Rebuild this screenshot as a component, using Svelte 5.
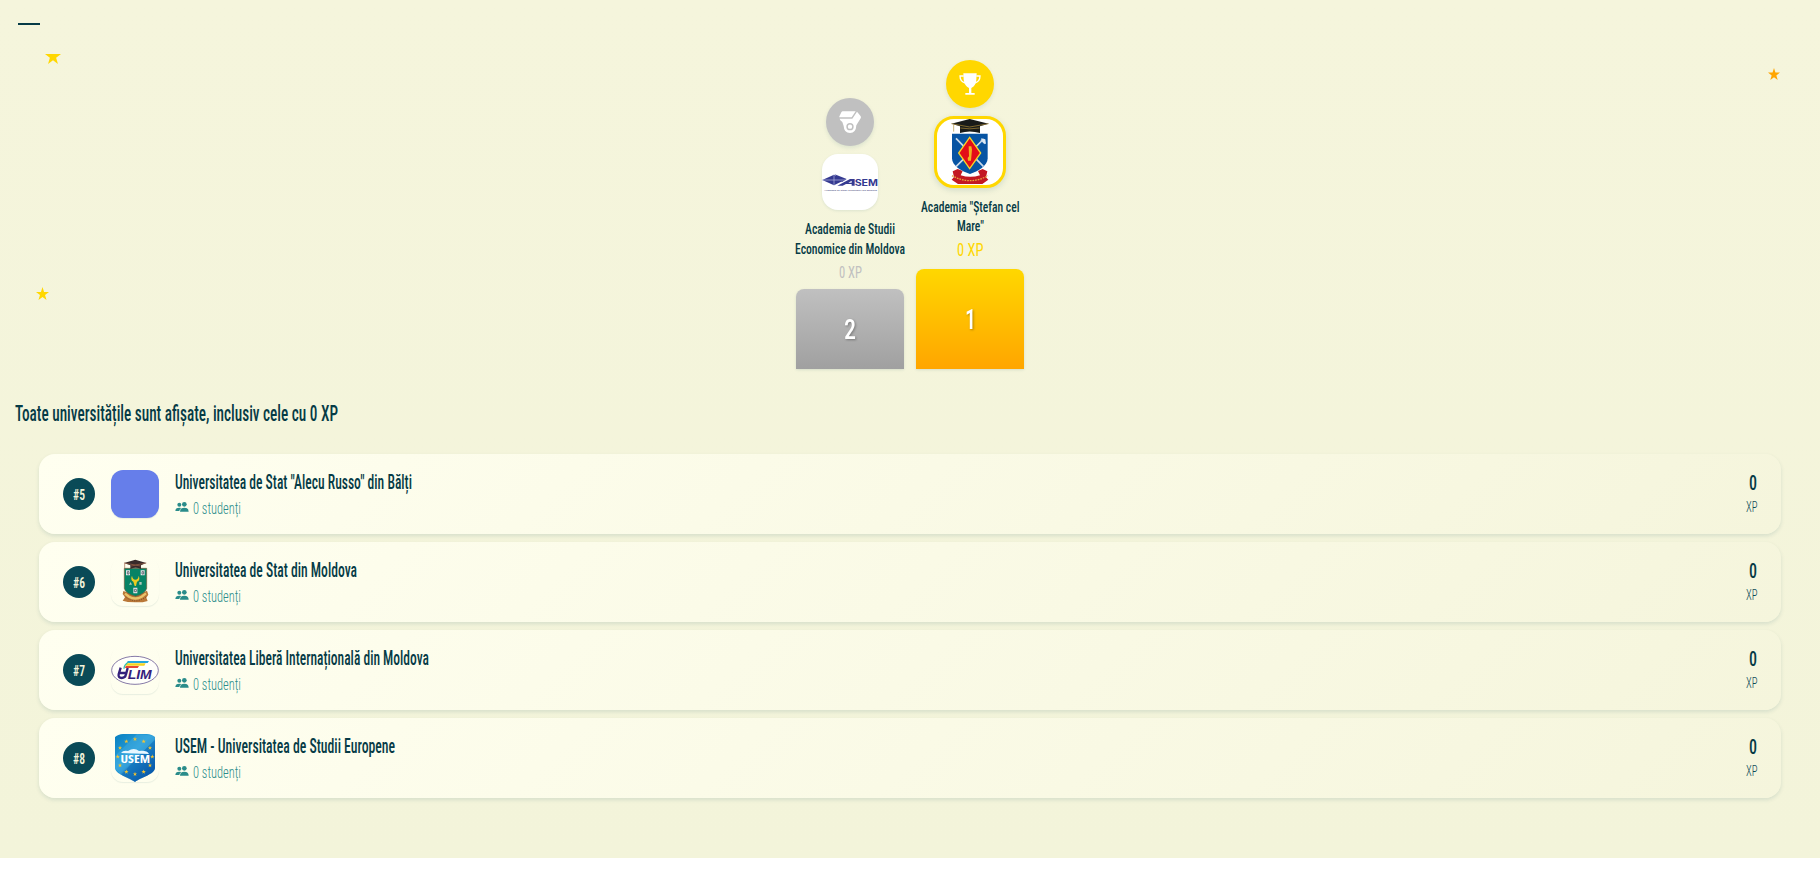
<script>
  const universities = [
    { rank: 5, name: 'Universitatea de Stat "Alecu Russo" din Bălți', width: 237, logo: 'blank' },
    { rank: 6, name: 'Universitatea de Stat din Moldova', width: 182, logo: 'usm' },
    { rank: 7, name: 'Universitatea Liberă Internațională din Moldova', width: 254, logo: 'ulim' },
    { rank: 8, name: 'USEM - Universitatea de Studii Europene', width: 220, logo: 'usem' }
  ];
  const euStars = Array.from({ length: 12 }, (_, i) => {
    const a = (i * Math.PI) / 6;
    return { x: 24 + 17.3 * Math.sin(a), y: 22.5 - 17.5 * Math.cos(a) };
  });
</script>

{#snippet line(text, width, size, height, base)}
  <svg class="line" {width} {height}>
    <text x="0" y={base} font-size={size} textLength={width} lengthAdjust="spacingAndGlyphs">{text}</text>
  </svg>
{/snippet}

{#snippet star(size)}
  <svg width={size} height={size} viewBox="0 0 20 19" preserveAspectRatio="none">
    <path fill="currentColor" d="M10 0l2.4 7.2H20l-6.1 4.5 2.3 7.3L10 14.5 3.8 19l2.3-7.3L0 7.2h7.6z" />
  </svg>
{/snippet}

{#snippet crest()}
  <svg width="66" height="66" viewBox="0 0 198 198">
    <path fill="#0754a3" d="M45 44h107v74c0 23-29 39-53 47-25-8-54-24-54-47z" />
    <path fill="none" stroke="#c9d9e8" stroke-width="5" d="M57 58l82 84M140 60l-83 83M132 62l12 12" />
    <path fill="#dfe9f3" d="M132 58l13 3 2 14-7-4z" />
    <path fill="#e30d18" stroke="#f6d426" stroke-width="4" d="M98 55l33 47-33 47-33-47z" />
    <path fill="#efb21f" d="M95 82h8l2 10-3 33h-9l-1-8 4-5z" />
    <path fill="#c31822" d="M47 157l15-7 15 6-6 13c19 6 39 6 58 0l-6-13 14-6 14 7-4 18 7 7-18 13H63l-19-13 7-8z" />
    <path fill="none" stroke="#e9a63b" stroke-width="4" stroke-dasharray="5 3" d="M45 170q54 30 108 0" />
    <path fill="#191b19" d="M43 14L98 0l57 14-26 8v20q-31-9-60 0V22z" />
    <path fill="none" stroke="#b18e38" stroke-width="2" d="M43 14l55 10 57-10M50 18v20M70 27q28 5 58 0" />
  </svg>
{/snippet}

{#snippet asem()}
  <svg width="56" height="56" viewBox="0 0 168 168">
    <path fill="#353a91" d="M1 78l35-16 34 15-34 17z" />
    <path fill="#353a91" d="M46 95l38-20h14v20h-9v-5H72l-10 5zM79 86h10v-6z" />
    <path fill="#353a91" d="M38 61l36 14-14 9z" />
    <path stroke="#b9bce2" stroke-width="2" fill="none" d="M1 78h69M36 62v32" />
    <text x="98" y="95" font-size="25" font-family="Inter" font-weight="700" fill="#353a91" textLength="70" lengthAdjust="spacingAndGlyphs">SEM</text>
    <text x="7" y="111" font-size="7.5" font-family="Liberation Sans" font-weight="700" fill="#6a6c94" textLength="158" lengthAdjust="spacingAndGlyphs">Academia de Studii Economice din Moldova</text>
  </svg>
{/snippet}

{#snippet usm()}
  <svg width="48" height="48" viewBox="0 0 144 144">
    <path fill="#ba7838" d="M37 99l15 5 43 0 13-6 4 12-6 9 4 10-15 4-22 0-23-1-15-4 7-10-7-10z" />
    <path fill="none" stroke="#e9c36a" stroke-width="7" d="M42 107l12 9q19 11 38 0l13-10" />
    <path fill="none" stroke="#5c3b20" stroke-width="2" stroke-dasharray="3 4" d="M44 117q29 23 61 0" />
    <path fill="#078365" stroke="#725b38" stroke-width="2" d="M40 31h67v60q-3 15-33 24-31-8-34-24z" />
    <path fill="#e8e9ed" d="M45 37h12v15H45zM89 37h12v15H89zM67 89h12v17H67z" />
    <path fill="none" stroke="#68717a" stroke-width="3" d="M49 41h5v7h-5zM93 41h5v7h-5zM70 94h6v7h-6z" />
    <path fill="#edcc1f" d="M63 53q2 12 10 12 9 0 10-12 6 14-5 18l-3 13h-4l-4-13Q57 65 63 53z" />
    <path fill="#b1c6b9" d="M54 80l5-8 4 8zM85 72h7v8h-7z" />
    <path fill="#382a2a" d="M39 15l34-10 33 10-16 7v11q-16-8-32 0V22z" />
    <path fill="none" stroke="#a16548" stroke-width="2" d="M39 15l34 6 33-6M41 17v14M60 24q14-5 29 0" />
  </svg>
{/snippet}

{#snippet ulim()}
  <svg width="48" height="48" viewBox="0 0 144 144">
    <ellipse cx="72" cy="73" rx="70" ry="42" fill="#fffffa" stroke="#6d5f98" stroke-width="2.5" />
    <path fill="#23a6df" d="M50 45h64l-4 6H48z" />
    <path fill="#f4d322" d="M46 52h58l-4 7H43z" />
    <path fill="#e64835" d="M44 60h40l-4 6H42z" />
    <path fill="none" stroke="#31beaf" stroke-width="4" d="M53 48q-14 8-14 20" />
    <path fill="none" stroke="#35207c" stroke-width="7" d="M29 65l-6 20q-2 11 9 11t13-11l5-19M26 81h21" />
    <text x="50" y="99" font-size="40" font-family="Liberation Sans" font-style="italic" font-weight="700" fill="#35207c" textLength="72" lengthAdjust="spacingAndGlyphs">LIM</text>
  </svg>
{/snippet}

{#snippet usem()}
  <svg width="48" height="48" viewBox="0 0 48 48">
    <defs>
      <linearGradient id="shield" x1="0" y1="0" x2=".8" y2="1">
        <stop offset="0" stop-color="#087fc0" /><stop offset=".45" stop-color="#299fda" /><stop offset="1" stop-color="#0758ab" />
      </linearGradient>
    </defs>
    <path fill="url(#shield)" d="M6 0h36a2 2 0 0 1 2 2v32c0 6-13 9-20 14C17 43 4 40 4 34V2a2 2 0 0 1 2-2z" />
    <path fill="#034fa2" opacity=".3" d="M44 6v28c0 6-13 9-20 14-5-3-11-5-15-8z" />
    <path fill="#58b8e8" opacity=".3" d="M26 0L4 22v12l6 7L44 5V2z" />
    <path fill="#e7f7ff" d="M10 19q2-3 7-2 6-4 11 0 8-1 10 3z" />
    {#each euStars as s}
      <path fill="#f4c430" transform="translate({s.x - 2.2} {s.y - 2.2}) scale(.22)" d="M10 0l2.4 7.2H20l-6.1 4.5 2.3 7.3L10 14.5 3.8 19l2.3-7.3L0 7.2h7.6z" />
    {/each}
    <text x="9.5" y="28.7" font-size="11" font-family="Open Sans" font-weight="700" fill="#fff" textLength="29.5" lengthAdjust="spacingAndGlyphs">USEM</text>
  </svg>
{/snippet}

<main>
  <header><span class="menu"></span></header>

  <section class="stage">
    <span class="star s1">{@render star(16)}</span>
    <span class="star s2">{@render star(13)}</span>
    <span class="star s3">{@render star(12)}</span>

    <div class="place second">
      <div class="medal">
        <svg width="22" height="22" viewBox="0 0 66 66">
          <path fill="#fff" d="M11 1h39L38 19H1q-1-2 1-5L7 4q2-3 4-3z" />
          <path fill="#fff" fill-rule="evenodd" d="M2 23h38L54 2l10 12q3 4 1 8L52 43Q51 66 33 66T14 45L10 33 4 28zM33 36a11 11 0 1 0 0 22 11 11 0 1 0 0-22z" />
          <circle cx="33" cy="47" r="6.5" fill="#fff" />
        </svg>
      </div>
      <div class="logo">{@render asem()}</div>
      <div class="name">
        {@render line('Academia de Studii', 90, 15.5, 20, 14.8)}
        {@render line('Economice din Moldova', 110, 15.5, 20, 15)}
      </div>
      <div class="xp">{@render line('0 XP', 23, 15.8, 20, 15)}</div>
      <div class="block">{@render line('2', 12, 28, 40, 30)}</div>
    </div>

    <div class="place first">
      <div class="medal">
        <svg width="22" height="22" viewBox="0 0 66 66">
          <path fill="#fff" d="M13 1h40l-1 19q-2 19-15 25v15h10v5H19v-5h11V45Q17 39 14 20z" />
          <path fill="none" stroke="#fff" stroke-width="4" d="M14 9H3q0 17 16 21M52 9h11q0 17-16 21" />
        </svg>
      </div>
      <div class="logo">{@render crest()}</div>
      <div class="name">
        {@render line('Academia "Ștefan cel', 98.5, 15.5, 19, 15)}
        {@render line('Mare"', 27, 15.5, 19, 15)}
      </div>
      <div class="xp">{@render line('0 XP', 26.5, 19, 22, 16)}</div>
      <div class="block">{@render line('1', 11, 28, 40, 29.5)}</div>
    </div>
  </section>

  <h2>{@render line('Toate universitățile sunt afișate, inclusiv cele cu 0 XP', 323, 21.5, 30, 22.5)}</h2>

  <ul>
    {#each universities as u}
      <li>
        <span class="rank">{@render line('#' + u.rank, 12, 14.5, 20, 16.3)}</span>
        <span class="badge {u.logo}">
          {#if u.logo === 'usm'}{@render usm()}{:else if u.logo === 'ulim'}{@render ulim()}{:else if u.logo === 'usem'}{@render usem()}{/if}
        </span>
        <div class="info">
          <div class="title">{@render line(u.name, u.width, 19.9, 26, 21)}</div>
          <div class="students">
            <svg width="14" height="10" viewBox="0 0 42 30">
              <circle cx="13" cy="8" r="6" /><circle cx="28" cy="7" r="7" />
              <path d="M1 27q0-10 12-10 4 0 6 1-6 4-6 9zM15 29q0-12 13-12t13 12z" />
            </svg>
            {@render line('0 studenți', 48, 15.8, 20, 14.6)}
          </div>
        </div>
        <div class="score">
          <div class="points">{@render line('0', 8, 19.7, 26, 21)}</div>
          <div class="unit">{@render line('XP', 11.5, 14.5, 20, 14.8)}</div>
        </div>
      </li>
    {/each}
  </ul>
</main>

<style>
  :global(body) { background: #fff; }
  main {
    box-sizing: border-box;
    height: 858px;
    background: linear-gradient(#f5f5dc, #f3f4da);
    color: #063b46;
    font-family: Roboto, sans-serif;
    font-stretch: 75%;
  }
  svg { display: block; }
  .line { overflow: visible; flex: none; }
  .line text { fill: currentColor; }
  header { height: 54px; display: flex; padding: 23px 18px 0; box-sizing: border-box; }
  .menu { width: 22px; height: 2px; background: #063b46; }
  .stage {
    position: relative;
    height: 320px;
    padding-bottom: 5px;
    box-sizing: border-box;
    overflow: hidden;
    display: flex;
    justify-content: center;
    align-items: flex-end;
    gap: 12px;
  }
  .star { position: absolute; color: #ffd700; }
  .s1 { left: 45px; top: -6px; }
  .s2 { left: 35.5px; top: 232.5px; }
  .s3 { left: 1768px; top: 14px; color: #ffa500; }
  .place { width: 108px; display: flex; flex-direction: column; align-items: center; }
  .medal {
    width: 48px; height: 48px; border-radius: 50%;
    display: flex; align-items: center; justify-content: center;
    margin-bottom: 8px;
    box-shadow: 0 2px 4px rgba(10, 75, 90, .1);
  }
  .logo { box-sizing: border-box; background: #fff; overflow: hidden; }
  .name { display: flex; flex-direction: column; align-items: center; font-weight: 500; }
  .block {
    width: 108px; border-radius: 8px 8px 0 0; color: #fff; font-weight: 500;
    display: flex; align-items: center; justify-content: center;
    box-shadow: 0 1px 3px rgba(10, 75, 90, .12);
  }
  .block :global(svg) { filter: drop-shadow(1px 1px 1px rgba(0, 0, 0, .3)); }
  .second .medal { background: #c0c0c0; }
  .second .logo { width: 56px; height: 56px; border-radius: 16px; margin-bottom: 9px; box-shadow: 0 1px 3px rgba(10, 75, 90, .1); }
  .second .xp { color: #c0c0c0; margin: 4px 0 6px; }
  .second .block { height: 80px; background: linear-gradient(#c0c0c0, #a0a0a0); }
  .first .medal { background: #ffd700; }
  .first .logo { width: 72px; height: 72px; border: 3px solid #ffd700; border-radius: 20px; margin-bottom: 9px; box-shadow: 0 2px 6px rgba(10, 75, 90, .15); }
  .first .xp { color: #ffd700; font-weight: 400; margin: 5px 0 7px; }
  .first .block { height: 100px; background: linear-gradient(#ffd700, #ffa500); }
  h2 { margin: 24px 0 0 15px; height: 56px; font-weight: 500; font-size: 20px; }
  ul { list-style: none; margin: 0; padding: 0 39px; display: flex; flex-direction: column; gap: 8px; }
  li {
    height: 80px; box-sizing: border-box; padding: 0 24px; border-radius: 16px;
    display: flex; align-items: center; gap: 16px;
    background: linear-gradient(135deg, #fffff0, #f5f5dc);
    box-shadow: 0 2px 4px rgba(10, 75, 90, .12);
  }
  .rank {
    width: 32px; height: 32px; border-radius: 50%; background: #0a4a57; color: #f5f5dc;
    display: flex; align-items: center; justify-content: center; font-weight: 600;
  }
  .badge { width: 48px; height: 48px; border-radius: 12px; overflow: hidden; box-shadow: 0 1px 1px rgba(10, 75, 90, .09); }
  .blank { background: #667eea; }
  .info { flex: 1; height: 80px; padding-top: 14px; box-sizing: border-box; }
  .title { font-weight: 500; }
  .students { display: flex; align-items: center; gap: 4px; margin-top: 5px; height: 20px; color: #2a8c8a; fill: currentColor; font-weight: 300; }
  .students > svg:first-child { margin-top: -5px; }
  .score { height: 80px; padding-top: 15px; box-sizing: border-box; display: flex; flex-direction: column; align-items: flex-end; }
  .points { font-weight: 500; }
  .unit { margin-top: 2px; color: #0a4a57; font-weight: 300; }
</style>
